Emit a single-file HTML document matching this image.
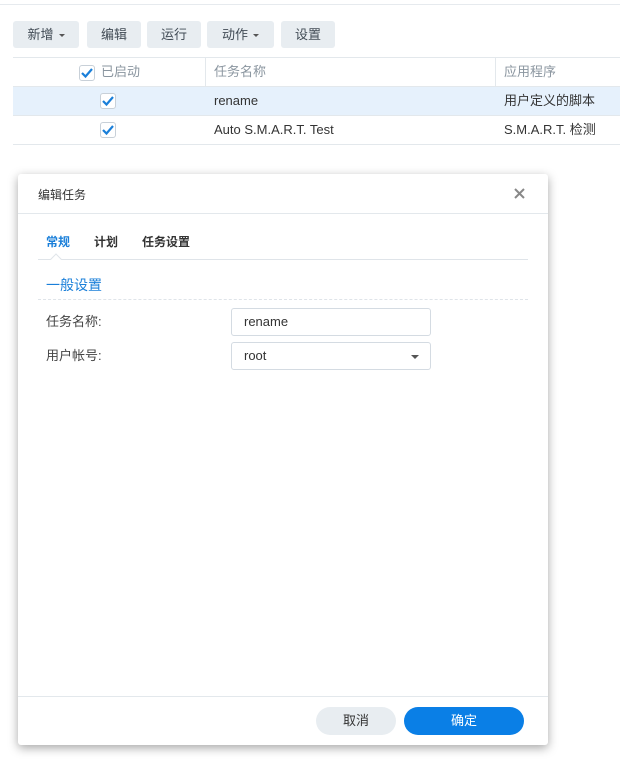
<!DOCTYPE html>
<html><head><meta charset="utf-8"><style>
*{box-sizing:border-box;margin:0;padding:0}
body{width:620px;height:759px;background:#fff;position:relative;overflow:hidden;font-family:"Liberation Sans","Noto Sans CJK SC",sans-serif;font-size:13px;color:#333}
.abs{position:absolute}
.tb{position:absolute;top:21px;height:27px;background:#e8edf1;border-radius:3px;line-height:27px;text-align:center;color:#414b55}
.car{display:inline-block;width:0;height:0;border-left:3px solid transparent;border-right:3px solid transparent;border-top:3px solid #555;vertical-align:middle;margin-left:5px}
.row{position:absolute;left:13px;width:607px;border-bottom:1px solid #e3e8ec}
.row span{position:absolute;top:0;line-height:28px;height:28px}
.cb{position:absolute;width:16px;height:16px;border:1px solid #c8d0d8;border-radius:3px;background:#fff}
.cb svg{position:absolute;left:0px;top:0px}
.inp{position:absolute;width:200px;height:28px;border:1px solid #d4dbe2;border-radius:3px;line-height:26px;padding-left:12px;color:#333}
</style></head><body>
<div class="abs" style="left:0;top:4px;width:620px;height:1px;background:#e6eaee"></div>
<div class="tb" style="left:13px;width:66px">新增<span class="car"></span></div>
<div class="tb" style="left:87px;width:54px">编辑</div>
<div class="tb" style="left:147px;width:54px">运行</div>
<div class="tb" style="left:207px;width:67px">动作<span class="car"></span></div>
<div class="tb" style="left:281px;width:54px">设置</div>

<div class="row" style="top:57px;height:30px;border-top:1px solid #e3e8ec;color:#8a959f">
 <div class="cb" style="left:66px;top:7px"><svg width="14" height="14" viewBox="0 0 14 14"><path d="M2 7l3.5 3.5L12 3" stroke="#1a7fd9" stroke-width="2.2" fill="none"/></svg></div>
 <span style="left:88px">已启动</span>
 <div class="abs" style="left:192px;top:0;width:1px;height:29px;background:#e3e8ec"></div>
 <span style="left:201px">任务名称</span>
 <div class="abs" style="left:482px;top:0;width:1px;height:29px;background:#e3e8ec"></div>
 <span style="left:491px">应用程序</span>
</div>
<div class="row" style="top:87px;height:29px;background:#e6f1fc">
 <div class="cb" style="left:87px;top:6px"><svg width="14" height="14" viewBox="0 0 14 14"><path d="M2 7l3.5 3.5L12 3" stroke="#1a7fd9" stroke-width="2.2" fill="none"/></svg></div>
 <span style="left:201px">rename</span>
 <span style="left:491px">用户定义的脚本</span>
</div>
<div class="row" style="top:116px;height:29px">
 <div class="cb" style="left:87px;top:6px"><svg width="14" height="14" viewBox="0 0 14 14"><path d="M2 7l3.5 3.5L12 3" stroke="#1a7fd9" stroke-width="2.2" fill="none"/></svg></div>
 <span style="left:201px">Auto S.M.A.R.T. Test</span>
 <span style="left:491px">S.M.A.R.T. 检测</span>
</div>

<div class="abs" style="left:18px;top:174px;width:530px;height:571px;background:#fff;border-radius:3px;box-shadow:0 3px 10px rgba(0,0,0,.35)">
 <span class="abs" style="left:20px;top:12px;font-size:12px;color:#333">编辑任务</span>
 <svg class="abs" style="left:496px;top:14px" width="11" height="11" viewBox="0 0 11 11"><path d="M1 1l9 9M10 1l-9 9" stroke="#888" stroke-width="2"/></svg>
 <div class="abs" style="left:0;top:39px;width:530px;height:1px;background:#e3e8ec"></div>
 <span class="abs" style="left:28px;top:59px;font-size:12px;font-weight:bold;color:#1a7fd9">常规</span>
 <span class="abs" style="left:76px;top:59px;font-size:12px;font-weight:bold;color:#333">计划</span>
 <span class="abs" style="left:124px;top:59px;font-size:12px;font-weight:bold;color:#333">任务设置</span>
 <div class="abs" style="left:20px;top:85px;width:490px;height:1px;background:#dfe4e9"></div>
 <div class="abs" style="left:34px;top:81px;width:8px;height:8px;background:#fff;border-left:1px solid #dfe4e9;border-top:1px solid #dfe4e9;transform:rotate(45deg)"></div>
 <span class="abs" style="left:28px;top:101px;font-size:14px;color:#1a7fd9">一般设置</span>
 <div class="abs" style="left:20px;top:125px;width:490px;border-top:1px dashed #dfe4e9"></div>
 <span class="abs" style="left:28px;top:134px;line-height:28px;color:#444">任务名称:</span>
 <span class="abs" style="left:28px;top:168px;line-height:28px;color:#444">用户帐号:</span>
 <div class="inp" style="left:213px;top:134px">rename</div>
 <div class="inp" style="left:213px;top:168px">root<span class="abs" style="right:11px;top:12px;border-left:4px solid transparent;border-right:4px solid transparent;border-top:4px solid #555"></span></div>
 <div class="abs" style="left:0;top:522px;width:530px;height:1px;background:#e3e8ec"></div>
 <div class="abs" style="left:298px;top:533px;width:80px;height:28px;border-radius:14px;background:#e8edf1;text-align:center;line-height:28px;color:#333">取消</div>
 <div class="abs" style="left:386px;top:533px;width:120px;height:28px;border-radius:14px;background:#0a7fe6;text-align:center;line-height:28px;color:#fff">确定</div>
</div>
</body></html>
